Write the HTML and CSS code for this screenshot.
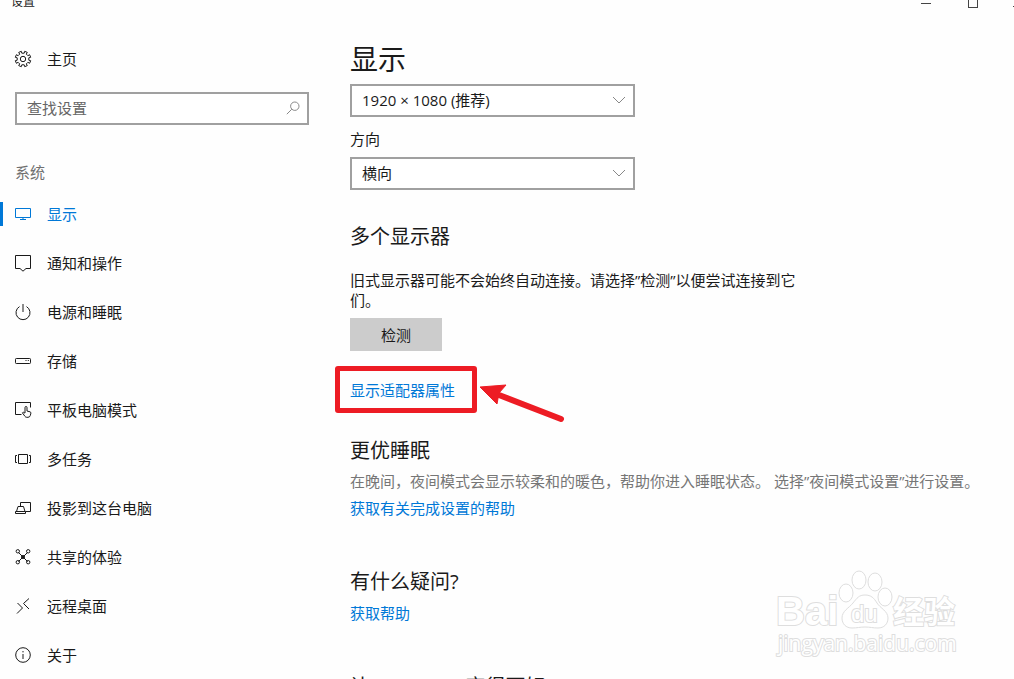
FILE: index.html
```
<!DOCTYPE html>
<html lang="zh-CN">
    <head>
        <meta charset="utf-8">
        <title>设置</title>
        <link rel="stylesheet" href="styles.css">
    </head>

    <body>
        <header class="titlebar">
            <span>设置</span>
            <svg class="window-buttons" width="96" height="12" viewBox="0 0 96 12">
                <path d="M3 7.500h10" />
                <rect x="50.500" y="1.500" width="9" height="10" />
                <path d="M95 1l10 10M95 11L105 1" />
            </svg>
        </header>

        <div class="app">
            <aside class="sidebar">
                <a class="home" href="#">
                    <svg class="icon" viewBox="0 0 18 18">
                        <path d="M7.300 1.300l.5 1.900h2.400l.5-1.900 2.600 1.100-1 1.700 1.600 1.600 1.700-1 1.100 2.600-1.900.5v2.400l1.900.5-1.100 2.600-1.700-1-1.600 1.600 1 1.700-2.600 1.100-.5-1.900H7.800l-.5 1.900-2.600-1.100 1-1.700-1.600-1.600-1.700 1-1.100-2.600 1.900-.5V7.800l-1.900-.5 1.100-2.600 1.700 1 1.600-1.600-1-1.700z" />
                        <circle cx="9" cy="9" r="2.700" />
                    </svg>
                    主页
                </a>

                <form class="search">
                    <input type="text" placeholder="查找设置" aria-label="查找设置">
                    <svg class="search-icon" viewBox="0 0 14 14">
                        <circle cx="8.800" cy="5.200" r="4.200" />
                        <path d="M5.800 8.200L.8 13.200" />
                    </svg>
                </form>

                <p class="group">系统</p>

                <nav class="nav">
                    <a class="nav-item active" href="#">
                        <svg class="icon" viewBox="0 0 18 18">
                            <path d="M1.500 3.500h15v9h-15zM9 12.500v2M6 14.500h6" />
                        </svg>
                        显示
                    </a>
                    <a class="nav-item" href="#">
                        <svg class="icon" viewBox="0 0 18 18">
                            <path d="M1.500 1.500h15v13h-4.500L9 17.200 6 14.500H1.500z" />
                        </svg>
                        通知和操作
                    </a>
                    <a class="nav-item" href="#">
                        <svg class="icon" viewBox="0 0 18 18">
                            <path d="M5.500 3.600a7 7 0 1 0 7 0M9 1v8" />
                        </svg>
                        电源和睡眠
                    </a>
                    <a class="nav-item" href="#">
                        <svg class="icon" viewBox="0 0 18 18">
                            <rect x="1.500" y="6.500" width="15" height="5" rx=".8" />
                            <path d="M11.500 8.500h1M13.800 8.500h1" />
                        </svg>
                        存储
                    </a>
                    <a class="nav-item" href="#">
                        <svg class="icon" viewBox="0 0 18 18">
                            <path d="M7.500 13.500h-6v-12h15v5" />
                            <path d="M11 12V6.500a1 1 0 0 1 2 0V10l3 .8q1 .3.9 1.300l-.6 2.400q-.5 1.800-2.300 1.800h-1.200q-1.200 0-1.900-1l-2.500-3.500q.8-1 1.700-.3l.9.900" />
                        </svg>
                        平板电脑模式
                    </a>
                    <a class="nav-item" href="#">
                        <svg class="icon" viewBox="0 0 18 18">
                            <path d="M4.500 4.500h9v9h-9zM3 5.500H1.500v7H3M15 5.500h1.500v7H15" />
                        </svg>
                        多任务
                    </a>
                    <a class="nav-item" href="#">
                        <svg class="icon" viewBox="0 0 18 18">
                            <path d="M6.500 7V3.500h10v9h-5M4 7.500h5.500l1.500 5H2.500zM1.500 14.500h10v-2h-10z" />
                        </svg>
                        投影到这台电脑
                    </a>
                    <a class="nav-item" href="#">
                        <svg class="icon" viewBox="0 0 18 18">
                            <path d="M4.500 4.500l9 9M13.500 4.500l-9 9" />
                            <circle cx="3.800" cy="3.300" r="1.700" />
                            <circle cx="14.200" cy="3.300" r="1.700" />
                            <circle cx="3.800" cy="14.200" r="1.700" />
                            <circle cx="14.200" cy="14.200" r="1.700" />
                            <circle class="hub" cx="9" cy="9" r="1.500" />
                        </svg>
                        共享的体验
                    </a>
                    <a class="nav-item" href="#">
                        <svg class="icon" viewBox="0 0 18 18">
                            <path d="M3.500 6l5 5-5.500 5.500M15 1.500L9.500 6.500l5.500 5.500" />
                        </svg>
                        远程桌面
                    </a>
                    <a class="nav-item" href="#">
                        <svg class="icon" viewBox="0 0 18 18">
                            <circle cx="9" cy="9" r="7.300" />
                            <path d="M9 8v5M9 5v1.400" />
                        </svg>
                        关于
                    </a>
                </nav>
            </aside>

            <main class="content">
                <h1>显示</h1>

                <div class="dropdown">
                    <select aria-label="分辨率">
                        <option>1920 × 1080 (推荐)</option>
                    </select>
                    <svg class="chevron" viewBox="0 0 14 8">
                        <path d="M1 1l6 6 6-6" />
                    </svg>
                </div>

                <label class="field-label" for="orientation">方向</label>
                <div class="dropdown">
                    <select id="orientation">
                        <option>横向</option>
                    </select>
                    <svg class="chevron" viewBox="0 0 14 8">
                        <path d="M1 1l6 6 6-6" />
                    </svg>
                </div>

                <section class="displays">
                    <h2>多个显示器</h2>
                    <p class="detect-text">旧式显示器可能不会始终自动连接。请选择”检测”以便尝试连接到它们。</p>
                    <button class="detect" type="button">检测</button>
                    <div class="adapter">
                        <a class="link" href="#">显示适配器属性</a>
                        <svg class="arrow" width="88" height="42" viewBox="0 0 88 42">
                            <path d="M20 12L82 36" />
                            <polygon points="1,4 27,2 20,10 18,21" />
                        </svg>
                    </div>
                </section>

                <section class="sleep">
                    <h2>更优睡眠</h2>
                    <p class="note">在晚间，夜间模式会显示较柔和的暖色，帮助你进入睡眠状态。 选择”夜间模式设置”进行设置。</p>
                    <a class="link" href="#">获取有关完成设置的帮助</a>
                </section>

                <section class="help">
                    <h2>有什么疑问?</h2>
                    <a class="link" href="#">获取帮助</a>
                </section>

                <section class="feedback">
                    <h2>让 Windows 变得更好</h2>
                </section>
            </main>
        </div>

        <svg class="watermark" width="190" height="94" viewBox="0 0 190 94">
            <text class="mark-latin" x="6" y="59">Bai</text>
            <ellipse cx="76" cy="27" rx="7" ry="9" />
            <ellipse cx="89" cy="14" rx="7" ry="9" />
            <ellipse cx="105" cy="16" rx="7" ry="9" />
            <ellipse cx="115" cy="31" rx="7" ry="9" />
            <path d="M95 29c6 0 9 3 12 8s11 8 11 15c0 6-4 10-10 10-5 0-8-1-13-1s-8 1-13 1c-6 0-10-4-10-10 0-7 7-10 11-15s6-8 12-8z" />
            <text class="mark-du" x="81" y="56">du</text>
            <text class="mark-cjk" x="123" y="57">经验</text>
            <text class="mark-url" x="8" y="85">jingyan.baidu.com</text>
        </svg>
    </body>
</html>
```
FILE: styles.css
```
* {
    box-sizing: border-box;
}

body {
    position: relative;
    height: 100vh;
    margin: 0;
    overflow: hidden;
    background-color: #fefefe;
    color: #1a1a1a;
    font-family: "Open Sans", "Noto Sans CJK SC", sans-serif;
    font-size: 15px;
    line-height: 20px;
}

h1, h2, p {
    margin: 0;
    font-weight: normal;
}

a {
    color: inherit;
    text-decoration: none;
}

svg {
    fill: none;
    stroke: currentColor;
}

input, select, button {
    font: inherit;
    color: inherit;
}

.titlebar {
    display: flex;
    justify-content: space-between;
    align-items: center;
    height: 30px;
    margin-top: -13px;
    padding-left: 11px;
    font-size: 12px;
}

.window-buttons {
    color: #444;
}

.app {
    display: grid;
    grid-template-columns: 350px 1fr;
}

/* sidebar */
.sidebar {
    padding-top: 17px;
}

.icon {
    flex: none;
    width: 18px;
    height: 18px;
}

.home,
.nav-item {
    display: flex;
    align-items: center;
    gap: 15px;
    height: 49px;
    padding-left: 14px;
}

.search {
    display: flex;
    align-items: center;
    height: 33px;
    margin: 9px 41px 31px 15px;
    padding: 0 7px 2px 10px;
    border: 2px solid #a0a0a0;
    background-color: white;
}

.search input {
    flex: 1;
    min-width: 0;
    padding: 0;
    border: none;
    outline: none;
    background: none;
}

.search input::placeholder {
    color: #666;
}

.search-icon {
    width: 14px;
    height: 14px;
    color: #888;
}

.group {
    height: 33px;
    padding-left: 15px;
    color: #707070;
    line-height: 33px;
}

.nav-item.active {
    position: relative;
    color: #0078d7;
}

.nav-item.active::before {
    content: "";
    position: absolute;
    left: 0;
    width: 3px;
    height: 24px;
    background-color: #0078d7;
}

.hub {
    fill: currentColor;
}

/* content */
.content {
    padding: 22px 20px 0 0;
}

h1 {
    margin-bottom: 5px;
    font-size: 28px;
    line-height: 40px;
}

h2 {
    font-size: 20px;
    line-height: 28px;
}

.dropdown {
    position: relative;
    max-width: 285px;
}

.dropdown select {
    display: block;
    width: 100%;
    height: 33px;
    padding: 0 30px 2px 10px;
    border: 2px solid #a0a0a0;
    border-radius: 0;
    background-color: white;
    appearance: none;
}

.chevron {
    position: absolute;
    top: 12px;
    right: 9px;
    width: 14px;
    height: 8px;
    color: #888;
    pointer-events: none;
}

.field-label {
    display: block;
    margin: 12px 0 8px;
}

.displays {
    margin-top: 33px;
}

.detect-text {
    max-width: 456px;
    margin: 19px 0 8px;
}

.detect {
    display: block;
    width: 92px;
    height: 33px;
    padding: 0;
    border: none;
    background-color: #ccc;
}

.link {
    color: #0078d7;
}

.adapter {
    position: relative;
    width: fit-content;
    margin-top: 29px;
}

.adapter .link {
    display: block;
}

/* red frame and arrow drawn round the link */
.adapter::after {
    content: "";
    position: absolute;
    inset: -14px -22px -13px -15px;
    border: 5px solid #ed1c24;
    border-radius: 3px;
    pointer-events: none;
}

.arrow {
    position: absolute;
    top: 3px;
    left: calc(100% + 24px);
    color: #ed1c24;
}

.arrow path {
    stroke-width: 6;
    stroke-linecap: round;
}

.arrow polygon {
    fill: currentColor;
}

.sleep {
    margin-top: 37px;
}

.note {
    margin: 6px 0 7px;
    color: #767676;
}

.help {
    margin-top: 50px;
}

.help h2 {
    margin-bottom: 7px;
}

.feedback {
    margin-top: 50px;
}

/* watermark */
.watermark {
    position: absolute;
    right: 54px;
    bottom: 19px;
    fill: white;
    stroke: #dedede;
    pointer-events: none;
}

.watermark text {
    paint-order: stroke;
    stroke-width: 2;
}

.mark-latin {
    font-family: "Liberation Sans", sans-serif;
    font-size: 40px;
    font-weight: bold;
}

.mark-du {
    font-family: "Liberation Sans", sans-serif;
    font-size: 24px;
}

.mark-cjk {
    font-size: 31px;
    font-weight: bold;
}

.mark-url {
    font-size: 21px;
}
```
